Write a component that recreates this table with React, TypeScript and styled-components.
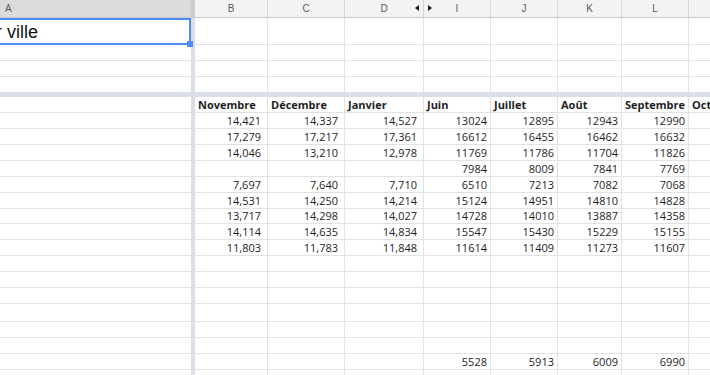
import React from "react";
import styled, { createGlobalStyle } from "styled-components";

const GlobalStyle = createGlobalStyle`
  html, body { margin: 0; padding: 0; background: #ffffff; overflow: hidden; }
  #root { width: 710px; height: 375px; }
`;

type Col = { key: string; w: number; fmt: boolean };

const COLS: Col[] = [
  { key: "B", w: 73, fmt: true },
  { key: "C", w: 77, fmt: true },
  { key: "D", w: 79, fmt: true },
  { key: "I", w: 67, fmt: false },
  { key: "J", w: 67, fmt: false },
  { key: "K", w: 64, fmt: false },
  { key: "L", w: 67, fmt: false },
  { key: "", w: 80, fmt: false },
];

const MONTHS = ["Novembre", "Décembre", "Janvier", "Juin", "Juillet", "Août", "Septembre", "Octobre"];

const DATA: string[][] = [
  ["14,421", "14,337", "14,527", "13024", "12895", "12943", "12990", ""],
  ["17,279", "17,217", "17,361", "16612", "16455", "16462", "16632", ""],
  ["14,046", "13,210", "12,978", "11769", "11786", "11704", "11826", ""],
  ["", "", "", "7984", "8009", "7841", "7769", ""],
  ["7,697", "7,640", "7,710", "6510", "7213", "7082", "7068", ""],
  ["14,531", "14,250", "14,214", "15124", "14951", "14810", "14828", ""],
  ["13,717", "14,298", "14,027", "14728", "14010", "13887", "14358", ""],
  ["14,114", "14,635", "14,834", "15547", "15430", "15229", "15155", ""],
  ["11,803", "11,783", "11,848", "11614", "11409", "11273", "11607", ""],
];

const EMPTY = ["", "", "", "", "", "", "", ""];
const TOTALS = ["", "", "", "5528", "5913", "6009", "6990", ""];

const DATA_HEIGHTS = [16, 16, 16, 16, 16, 16, 15, 16, 16];
const EMPTY_HEIGHTS = [16, 16, 16, 18, 16, 16];

const Sheet = styled.div`
  width: 710px;
  height: 375px;
  overflow: hidden;
  display: flex;
  flex-direction: column;
  font-family: "Open Sans", "Liberation Sans", sans-serif;
  color: #1e1e1e;
`;

const Row = styled.div<{ $h: number }>`
  display: flex;
  flex: none;
  height: ${(p) => p.$h}px;
  width: 800px;
`;

const HeaderCell = styled.div<{ $w: number; $selected?: boolean; $left?: boolean }>`
  position: relative;
  flex: none;
  box-sizing: border-box;
  width: ${(p) => p.$w}px;
  height: 100%;
  background: ${(p) => (p.$selected ? "#dcdcdc" : "#f3f3f3")};
  border-right: 1px solid #d6d6d6;
  border-bottom: 1px solid #c8c8c8;
  display: flex;
  align-items: center;
  justify-content: ${(p) => (p.$left ? "flex-start" : "center")};
  padding-left: ${(p) => (p.$left ? "5px" : "0")};
  font-family: "Liberation Sans", Arial, sans-serif;
  font-size: 10px;
  color: #5a5a5a;
`;

const HiddenArrow = styled.svg<{ $side: "left" | "right" }>`
  position: absolute;
  top: 5px;
  ${(p) => (p.$side === "right" ? "right: 4px;" : "left: 4px;")}
  width: 4px;
  height: 6px;
`;

const VDivider = styled.div<{ $header?: boolean }>`
  flex: none;
  width: 4px;
  height: 100%;
  background: ${(p) => (p.$header ? "#c9cbd0" : "#dadee6")};
`;

const FrozenCell = styled.div`
  position: relative;
  flex: none;
  box-sizing: border-box;
  width: 191px;
  height: 100%;
  border-bottom: 1px solid #e2e2e2;
`;

const SelectedCell = styled.div`
  position: relative;
  flex: none;
  box-sizing: border-box;
  width: 191px;
  height: 100%;
  border-top: 2px solid #4d8cf5;
  border-right: 2px solid #4d8cf5;
  border-bottom: 2px solid #4d8cf5;
  display: flex;
  align-items: flex-end;
  overflow: visible;
`;

const TitleClip = styled.div`
  width: 100%;
  height: 100%;
  overflow: hidden;
  display: flex;
  align-items: flex-end;
`;

const TitleText = styled.span`
  font-family: "Liberation Sans", Arial, sans-serif;
  font-size: 18px;
  line-height: 20px;
  padding-bottom: 1px;
  color: #111;
  white-space: nowrap;
  margin-left: -24px;
`;

const FillHandle = styled.div`
  position: absolute;
  right: -4px;
  bottom: -4px;
  width: 6px;
  height: 6px;
  background: #4d8cf5;
  z-index: 2;
`;

const Cell = styled.div<{ $w: number; $align: "left" | "right"; $pr: number; $bold?: boolean }>`
  flex: none;
  box-sizing: border-box;
  width: ${(p) => p.$w}px;
  height: 100%;
  border-right: 1px solid #e2e2e2;
  border-bottom: 1px solid #e2e2e2;
  display: flex;
  align-items: center;
  justify-content: ${(p) => (p.$align === "right" ? "flex-end" : "flex-start")};
  padding: 0 ${(p) => p.$pr}px 0 3px;
  font-size: 11px;
  font-weight: ${(p) => (p.$bold ? 700 : 400)};
  line-height: 14px;
  white-space: nowrap;
  overflow: hidden;
  color: #1e1e1e;
`;

const HDivider = styled.div`
  flex: none;
  height: 4px;
  width: 800px;
  background: #dadee6;
`;

const Arrow = ({ side }: { side: "left" | "right" }) => (
  <HiddenArrow $side={side} viewBox="0 0 4 6">
    {side === "right" ? <polygon points="4,0 4,6 0,3" fill="#222" /> : <polygon points="0,0 0,6 4,3" fill="#222" />}
  </HiddenArrow>
);

const BodyRow = ({ h, values, bold }: { h: number; values: string[]; bold?: boolean }) => (
  <Row $h={h}>
    <FrozenCell />
    <VDivider />
    {COLS.map((c, i) => (
      <Cell key={i} $w={c.w} $align={bold ? "left" : "right"} $pr={c.fmt ? 6 : 3} $bold={bold}>
        {values[i]}
      </Cell>
    ))}
  </Row>
);

export default function App() {
  return (
    <>
      <GlobalStyle />
      <Sheet>
        <Row $h={18}>
          <HeaderCell $w={191} $selected $left>
            A
          </HeaderCell>
          <VDivider $header />
          {COLS.map((c, i) => (
            <HeaderCell key={i} $w={c.w}>
              {c.key}
              {c.key === "D" && <Arrow side="right" />}
              {c.key === "I" && <Arrow side="left" />}
            </HeaderCell>
          ))}
        </Row>
        <Row $h={27}>
          <SelectedCell>
            <TitleClip>
              <TitleText>par ville</TitleText>
            </TitleClip>
            <FillHandle />
          </SelectedCell>
          <VDivider />
          {COLS.map((c, i) => (
            <Cell key={i} $w={c.w} $align="right" $pr={3} />
          ))}
        </Row>
        {[16, 16, 16].map((h, r) => (
          <BodyRow key={`top${r}`} h={h} values={EMPTY} />
        ))}
        <HDivider />
        <BodyRow h={16} values={MONTHS} bold />
        {DATA.map((vals, r) => (
          <BodyRow key={`d${r}`} h={DATA_HEIGHTS[r]} values={vals} />
        ))}
        {EMPTY_HEIGHTS.map((h, r) => (
          <BodyRow key={`e${r}`} h={h} values={EMPTY} />
        ))}
        <BodyRow h={16} values={TOTALS} />
        <BodyRow h={16} values={EMPTY} />
      </Sheet>
    </>
  );
}
